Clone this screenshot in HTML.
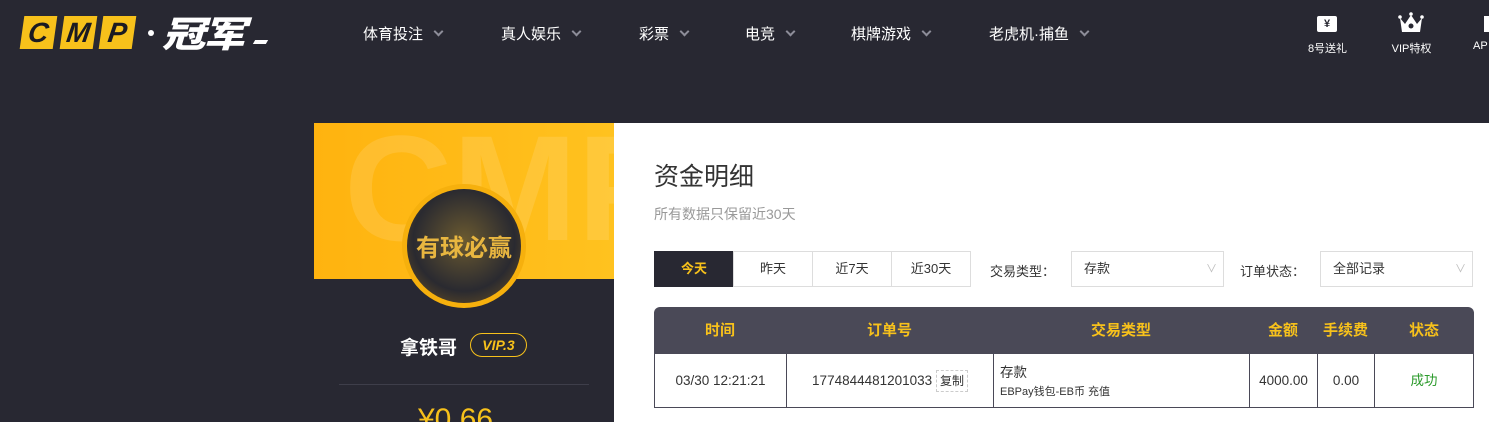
<!DOCTYPE html>
<html><head><meta charset="utf-8"><style>
*{margin:0;padding:0;box-sizing:border-box}
html,body{width:1489px;height:422px;overflow:hidden}
body{background:#282832;font-family:"Liberation Sans","Noto Sans CJK SC",sans-serif;position:relative}
.abs{position:absolute}
.logo b{position:absolute;top:16px;width:33px;height:33px;background:#f7c11b;color:#1b1b22;font:italic 900 28px/33px "Liberation Sans",sans-serif;text-align:center;transform:skewX(-8deg)}
.nav{position:absolute;top:23px;color:#fff;font-size:15px}
.nav span{position:absolute;white-space:nowrap}
.nav i{display:inline-block;width:7px;height:7px;border-right:2px solid #8d8d99;border-bottom:2px solid #8d8d99;transform:rotate(45deg);margin-left:12px;position:relative;top:-4px}
.ri{position:absolute;top:40px;color:#fff;font-size:11px;text-align:center}
.btn{position:absolute;top:251px;height:36px;border:1px solid #ddd;font-size:13px;line-height:34px;text-align:center;color:#333;background:#fff}
.sel{position:absolute;top:251px;height:36px;border:1px solid #ddd;font-size:13px;line-height:34px;padding-left:12px;color:#333}
.sel:after{content:"∨";position:absolute;right:6px;top:0;color:#bbb;font-size:11px}
.th{position:absolute;top:307px;height:47px;line-height:47px;color:#f7c11b;font-weight:bold;font-size:15px;text-align:center}
.td{position:absolute;top:354px;height:54px;border-left:1px solid #4a4957;border-bottom:1px solid #4a4957;font-size:13.5px;color:#333;text-align:center;line-height:54px}
</style></head><body>
<div class="logo"><b style="left:22px">C</b><b style="left:62px">M</b><b style="left:101px">P</b></div>
<div class="abs" style="left:148px;top:30px;width:6px;height:6px;border-radius:50%;background:#fff"></div>
<div class="abs" style="left:162px;top:10px;color:#fff;font:italic 900 36px/44px 'Noto Sans CJK SC',sans-serif;letter-spacing:-2px;transform:scaleX(1.2);transform-origin:left">冠军</div>
<div class="abs" style="left:254px;top:40px;width:13px;height:4px;background:#fff;transform:skewX(-30deg)"></div>
<div class="nav"><span style="left:363px">体育投注<i></i></span><span style="left:501px">真人娱乐<i></i></span><span style="left:639px">彩票<i></i></span><span style="left:745px">电竞<i></i></span><span style="left:851px">棋牌游戏<i></i></span><span style="left:989px">老虎机·捕鱼<i></i></span></div>
<div class="abs" style="left:1317px;top:16px;width:20px;height:16px;background:#fff;border-radius:2px;color:#282832;font-size:11px;font-weight:bold;text-align:center;line-height:16px">¥</div>
<div class="ri" style="left:1300px;width:55px">8号送礼</div>
<svg class="abs" style="left:1398px;top:12px" width="26" height="22" viewBox="0 0 26 22"><path d="M2 6 L7 12 L13 3 L19 12 L24 6 L22 20 L4 20Z" fill="#fff"/><circle cx="13" cy="14" r="2.5" fill="#282832"/><circle cx="2" cy="5" r="1.8" fill="#fff"/><circle cx="24" cy="5" r="1.8" fill="#fff"/><circle cx="13" cy="2" r="1.8" fill="#fff"/></svg>
<div class="ri" style="left:1384px;width:55px">VIP特权</div>
<div class="ri" style="left:1473px">AP</div>
<div class="abs" style="left:1484px;top:16px;width:5px;height:16px;background:#fff"></div>

<div class="abs" style="left:314px;top:123px;width:300px;height:156px;background:linear-gradient(90deg,#ffb30f,#ffc21f);overflow:hidden"><div style="position:absolute;left:30px;top:-10px;font:bold 150px/1 'Liberation Sans';color:rgba(255,255,255,.12)">CMP</div></div>
<div class="abs" style="left:314px;top:279px;width:300px;height:143px;background:#282832"></div>
<div class="abs" style="left:402px;top:184px;width:124px;height:124px;border-radius:50%;background:#f6b00d"></div>
<div class="abs" style="left:407px;top:189px;width:114px;height:114px;border-radius:50%;background:radial-gradient(circle at 50% 45%,#6b5a30,#2a2a30 60%,#7a5a20);color:#e8b640;font:bold 24px/114px 'Noto Sans CJK SC';text-align:center">有球必赢</div>
<div class="abs" style="left:400px;top:333px;color:#fff;font-weight:bold;font-size:19px">拿铁哥</div>
<div class="abs" style="left:470px;top:333px;width:57px;height:24px;border:1px solid #f7c11b;border-radius:12px;color:#f7c11b;font:italic bold 14px/22px 'Liberation Sans';text-align:center">VIP.3</div>
<div class="abs" style="left:339px;top:384px;width:250px;height:1px;background:#3e3e4a"></div>
<div class="abs" style="left:418px;top:403px;color:#f7c11b;font-size:30px">¥0.66</div>

<div class="abs" style="left:614px;top:123px;width:875px;height:299px;background:#fff"></div>
<div class="abs" style="left:654px;top:157px;font-size:25px;color:#333">资金明细</div>
<div class="abs" style="left:654px;top:204px;font-size:14px;color:#999">所有数据只保留近30天</div>
<div class="btn" style="left:654px;width:80px;background:#282832;border-color:#282832;color:#f7c11b;font-weight:bold">今天</div>
<div class="btn" style="left:733px;width:80px">昨天</div>
<div class="btn" style="left:812px;width:80px">近7天</div>
<div class="btn" style="left:891px;width:80px">近30天</div>
<div class="abs" style="left:990px;top:261px;font-size:13px;color:#333">交易类型：</div>
<div class="sel" style="left:1071px;width:153px">存款</div>
<div class="abs" style="left:1240px;top:261px;font-size:13px;color:#333">订单状态：</div>
<div class="sel" style="left:1320px;width:153px">全部记录</div>

<div class="abs" style="left:654px;top:307px;width:820px;height:47px;background:#4a4957;border-radius:6px 6px 0 0"></div>
<div class="th" style="left:654px;width:132px">时间</div>
<div class="th" style="left:786px;width:207px">订单号</div>
<div class="th" style="left:993px;width:256px">交易类型</div>
<div class="th" style="left:1249px;width:68px">金额</div>
<div class="th" style="left:1317px;width:57px">手续费</div>
<div class="th" style="left:1374px;width:100px">状态</div>
<div class="td" style="left:654px;width:132px">03/30 12:21:21</div>
<div class="td" style="left:786px;width:207px">1774844481201033 <span style="border:1px dashed #ccc;padding:3px 3px;font-size:12px">复制</span></div>
<div class="td" style="left:993px;width:256px;text-align:left;padding-left:6px;line-height:18px;padding-top:10px">存款<br><span style="font-size:11px">EBPay钱包-EB币 充值</span></div>
<div class="td" style="left:1249px;width:68px">4000.00</div>
<div class="td" style="left:1317px;width:57px">0.00</div>
<div class="td" style="left:1374px;width:100px;color:#2a9a2a;border-right:1px solid #4a4957">成功</div>
</body></html>
